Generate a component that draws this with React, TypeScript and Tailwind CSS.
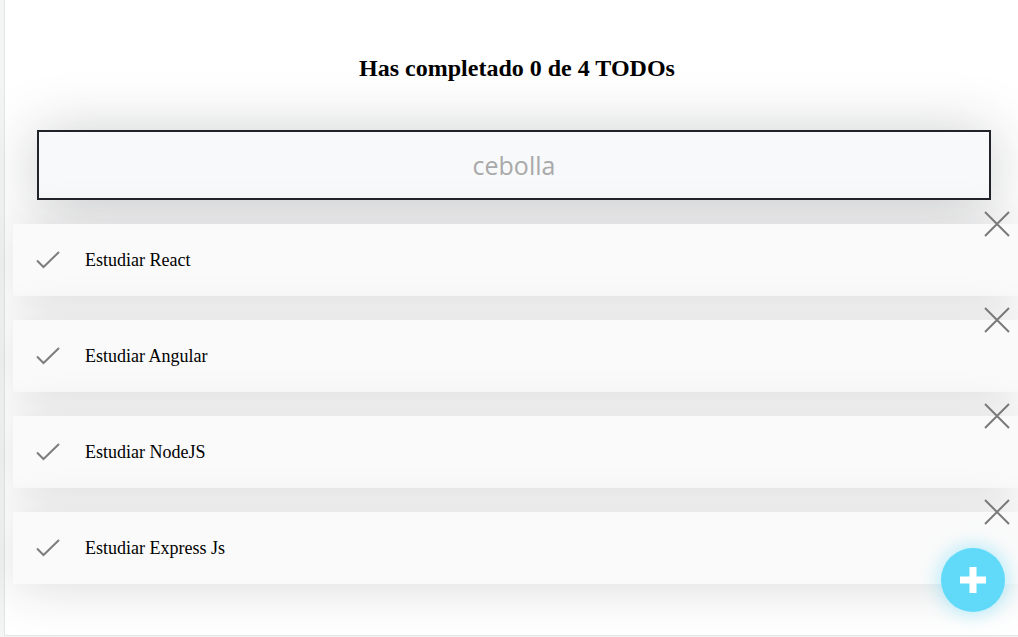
import React from 'react';

const todos = [
  { text: 'Estudiar React', completed: false },
  { text: 'Estudiar Angular', completed: false },
  { text: 'Estudiar NodeJS', completed: false },
  { text: 'Estudiar Express Js', completed: false },
];

const CheckIcon = () => (
  <svg width="26" height="20" viewBox="0 0 26 20" fill="none" className="shrink-0">
    <path d="M1 10.5 L7.5 17 L23 2" stroke="#7d7d7d" strokeWidth="2" />
  </svg>
);

const DeleteIcon = () => (
  <svg width="26" height="26" viewBox="0 0 26 26" fill="none">
    <path d="M1 1 L25 25 M25 1 L1 25" stroke="#7a7a7a" strokeWidth="2" />
  </svg>
);

const App: React.FC = () => {
  const completed = todos.filter((t) => t.completed).length;

  return (
    <div className="min-h-screen bg-[#f3f5f4] pl-[4px] overflow-hidden">
      <div className="relative h-[636px] bg-white border-l border-b border-[#e2e6e4]">
        {/* Counter */}
        <h2
          className="pt-[50px] pl-[11px] text-center text-[24px] font-bold text-black"
          style={{ fontFamily: '"Liberation Serif", "Times New Roman", serif' }}
        >
          Has completado {completed} de {todos.length} TODOs
        </h2>

        {/* Search */}
        <div className="ml-[32px] mt-[44px] w-[954px]">
          <input
            placeholder="cebolla"
            className="w-full h-[70px] bg-[#f8f9fb] border-2 border-[#202329] text-center text-[25px] text-[#333] placeholder:text-[#a9a9a9] outline-none shadow-[0_5px_60px_rgba(32,35,41,0.25)]"
            style={{ fontFamily: '"Open Sans", Lato, sans-serif' }}
          />
        </div>

        {/* List */}
        <ul className="mt-[24px] ml-[8px] flex flex-col gap-[24px]">
          {todos.map((todo) => (
            <li
              key={todo.text}
              className="relative h-[72px] flex items-center bg-[#fafafa] shadow-[0_5px_50px_rgba(32,35,41,0.15)]"
            >
              <span className="ml-[23px] mr-[23px] flex items-center">
                <CheckIcon />
              </span>
              <p
                className="text-[18px] text-black"
                style={{ fontFamily: '"Liberation Serif", "Times New Roman", serif' }}
              >
                {todo.text}
              </p>
              <span className="absolute right-[8px] top-[-13px]">
                <DeleteIcon />
              </span>
            </li>
          ))}
        </ul>

        {/* Create button */}
        <button className="absolute left-[936px] top-[548px] w-[64px] h-[64px] rounded-full bg-[#61dafa] flex items-center justify-center shadow-[0_0_20px_rgba(97,218,250,0.6)]">
          <svg width="26" height="26" viewBox="0 0 26 26">
            <rect x="0" y="9.5" width="26" height="7" fill="white" />
            <rect x="9.5" y="0" width="7" height="26" fill="white" />
          </svg>
        </button>
      </div>
    </div>
  );
};

export default App;
